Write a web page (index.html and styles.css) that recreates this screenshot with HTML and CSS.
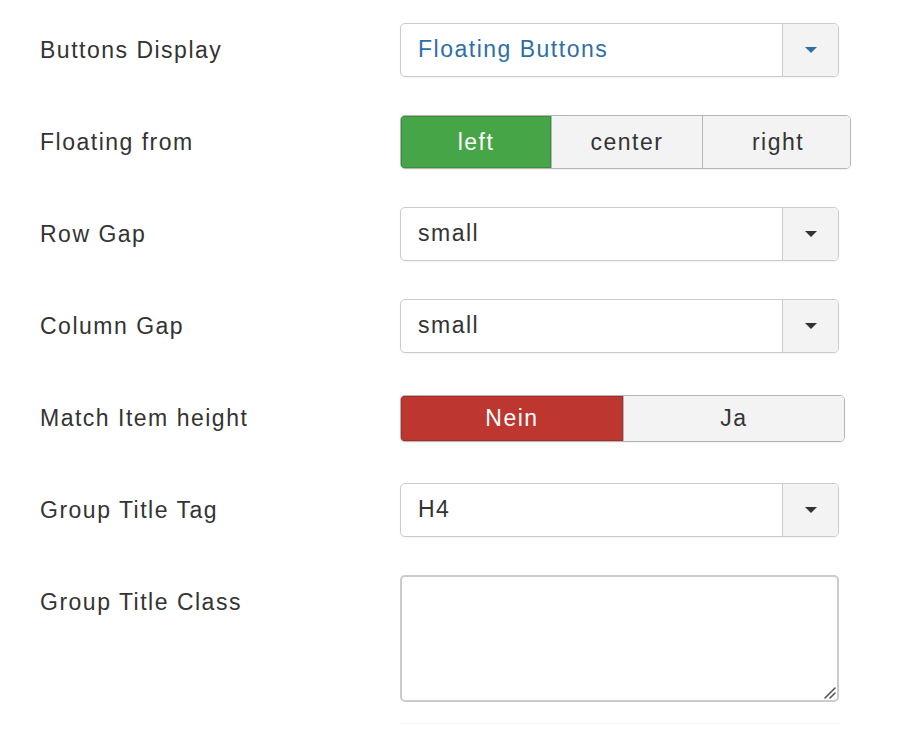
FILE: index.html
```html
<!DOCTYPE html>
<html>
<head>
<meta charset="utf-8">
<link rel="stylesheet" href="styles.css">
</head>
<body>
<div class="form">
  <div class="row">
    <div class="label">Buttons Display</div>
    <div class="control">
      <div class="select active">
        <span class="value">Floating Buttons</span>
        <span class="arrow"><span class="caret"></span></span>
      </div>
    </div>
  </div>
  <div class="row">
    <div class="label">Floating from</div>
    <div class="control">
      <div class="group three">
        <span class="btn green">left</span>
        <span class="btn">center</span>
        <span class="btn">right</span>
      </div>
    </div>
  </div>
  <div class="row">
    <div class="label">Row Gap</div>
    <div class="control">
      <div class="select">
        <span class="value">small</span>
        <span class="arrow"><span class="caret"></span></span>
      </div>
    </div>
  </div>
  <div class="row">
    <div class="label">Column Gap</div>
    <div class="control">
      <div class="select">
        <span class="value">small</span>
        <span class="arrow"><span class="caret"></span></span>
      </div>
    </div>
  </div>
  <div class="row">
    <div class="label">Match Item height</div>
    <div class="control">
      <div class="group two">
        <span class="btn red">Nein</span>
        <span class="btn">Ja</span>
      </div>
    </div>
  </div>
  <div class="row">
    <div class="label">Group Title Tag</div>
    <div class="control">
      <div class="select">
        <span class="value">H4</span>
        <span class="arrow"><span class="caret"></span></span>
      </div>
    </div>
  </div>
  <div class="row last">
    <div class="label">Group Title Class</div>
    <div class="control">
      <div class="textarea">
        <svg class="grip" width="12" height="12" viewBox="0 0 12 12"><path d="M1 11 L11 1 M6 11 L11 6" stroke="#555" stroke-width="1.6" stroke-linecap="round"/></svg>
      </div>
    </div>
  </div>
  <div class="divider"></div>
</div>
</body>
</html>
```
FILE: styles.css
```css
html, body {
  margin: 0;
  padding: 0;
  background: #fff;
}
body {
  font-family: "Liberation Sans", Arial, sans-serif;
  color: #333;
  font-size: 23px;
  letter-spacing: 1.5px;
}
.form {
  padding: 23px 0 0 40px;
}
.row {
  display: flex;
  align-items: flex-start;
  margin-bottom: 38px;
}
.row.last {
  margin-bottom: 21px;
}
.label {
  width: 360px;
  line-height: 54px;
  height: 54px;
  color: #333;
}
.control {
  display: flex;
  align-items: center;
  min-height: 54px;
}
.select {
  box-sizing: border-box;
  width: 439px;
  height: 54px;
  border: 1.5px solid #cbcbcb;
  border-radius: 5px;
  display: flex;
  align-items: stretch;
  overflow: hidden;
  box-shadow: 0 1px 2px rgba(0,0,0,0.06);
}
.select .value {
  flex: 1;
  padding-left: 17px;
  line-height: 51px;
  color: #333;
}
.select.active .value {
  color: #2f6ea7;
}
.select .arrow {
  width: 55px;
  background: #f3f3f3;
  border-left: 1.5px solid #cbcbcb;
  display: flex;
  align-items: center;
  justify-content: center;
}
.caret {
  width: 0;
  height: 0;
  border-left: 6.5px solid transparent;
  border-right: 6.5px solid transparent;
  border-top: 6.5px solid #333;
}
.select.active .caret {
  border-top-color: #2f6ea7;
}
.group {
  display: flex;
  box-sizing: border-box;
  border-radius: 5px;
  overflow: hidden;
  border: 1.5px solid #b5b5b5;
  box-shadow: 0 1px 2px rgba(0,0,0,0.06);
}
.group.three {
  width: 451px;
  height: 54px;
}
.group.two {
  width: 445px;
  height: 47px;
}
.btn {
  flex: 1;
  display: flex;
  align-items: center;
  justify-content: center;
  background: #f3f3f3;
  color: #333;
  border-left: 1.5px solid #b5b5b5;
}
.btn:first-child {
  border-left: none;
}
.btn.green {
  background: #46a546;
  color: #fff;
  box-shadow: inset 0 0 0 1px #3b8f3b;
}
.btn.red {
  background: #bd362f;
  color: #fff;
  box-shadow: inset 0 0 0 1px #a32d27;
}
.group.two .btn.red {
  flex: 0 0 222px;
}
.group.three .btn {
  flex: 0 0 150px;
}
.textarea {
  box-sizing: border-box;
  width: 439px;
  height: 127px;
  border: 2px solid #cbcbcb;
  border-radius: 5px;
  position: relative;
}
.grip {
  position: absolute;
  right: 1px;
  bottom: 1px;
}
.divider {
  margin-left: 360px;
  width: 440px;
  height: 1px;
  background: #f5f5f5;
}
```
